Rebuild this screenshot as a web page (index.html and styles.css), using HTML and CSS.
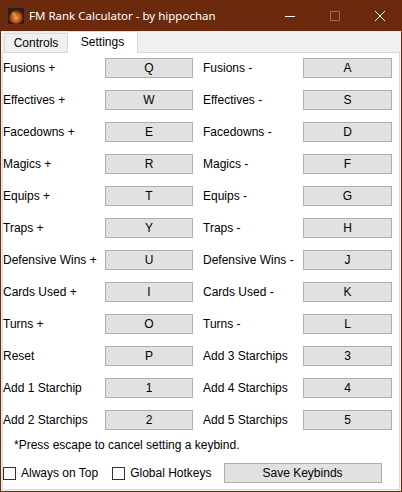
FILE: index.html
```html
<!DOCTYPE html>
<html lang="en">
  <head>
    <meta charset="UTF-8" />
    <title>FM Rank Calculator - by hippochan</title>
    <link rel="stylesheet" href="styles.css">
  </head>
  <body>
    <div class="window">

      <div class="titlebar">
        <svg class="app-icon" width="16" height="16" viewBox="0 0 16 16">
          <defs>
            <radialGradient id="glow" cx="0.5" cy="0.55" r="0.6">
              <stop offset="0" stop-color="#f2b040"/>
              <stop offset="0.45" stop-color="#c8601c"/>
              <stop offset="1" stop-color="#3a1a10"/>
            </radialGradient>
          </defs>
          <rect width="16" height="16" fill="#2c1c18"/>
          <ellipse cx="8" cy="9" rx="7" ry="7" fill="url(#glow)"/>
          <circle cx="6" cy="6" r="2" fill="#e89a3a" opacity="0.7"/>
        </svg>
        <span class="title">FM Rank Calculator - by hippochan</span>
        <div class="caption-buttons">
          <span class="cap-btn">
            <svg width="10" height="10" viewBox="0 0 10 10"><path d="M0 5.5H10" stroke="#fff" stroke-width="1"/></svg>
          </span>
          <span class="cap-btn">
            <svg width="10" height="10" viewBox="0 0 10 10"><rect x="0.5" y="0.5" width="9" height="9" fill="none" stroke="#9a6a55" stroke-width="1"/></svg>
          </span>
          <span class="cap-btn">
            <svg width="10" height="10" viewBox="0 0 10 10"><path d="M0 0L10 10M10 0L0 10" stroke="#fff" stroke-width="1"/></svg>
          </span>
        </div>
      </div>

      <div class="client">
        <div class="tabs">
          <span class="tab">Controls</span>
          <span class="tab active">Settings</span>
        </div>

        <div class="panel">
          <div class="keys">
            <span class="lbl">Fusions +</span><span class="key">Q</span>
            <span class="lbl">Fusions -</span><span class="key">A</span>

            <span class="lbl">Effectives +</span><span class="key">W</span>
            <span class="lbl">Effectives -</span><span class="key">S</span>

            <span class="lbl">Facedowns +</span><span class="key">E</span>
            <span class="lbl">Facedowns -</span><span class="key">D</span>

            <span class="lbl">Magics +</span><span class="key">R</span>
            <span class="lbl">Magics -</span><span class="key">F</span>

            <span class="lbl">Equips +</span><span class="key">T</span>
            <span class="lbl">Equips -</span><span class="key">G</span>

            <span class="lbl">Traps +</span><span class="key">Y</span>
            <span class="lbl">Traps -</span><span class="key">H</span>

            <span class="lbl">Defensive Wins +</span><span class="key">U</span>
            <span class="lbl">Defensive Wins -</span><span class="key">J</span>

            <span class="lbl">Cards Used +</span><span class="key">I</span>
            <span class="lbl">Cards Used -</span><span class="key">K</span>

            <span class="lbl">Turns +</span><span class="key">O</span>
            <span class="lbl">Turns -</span><span class="key">L</span>

            <span class="lbl">Reset</span><span class="key">P</span>
            <span class="lbl">Add 3 Starchips</span><span class="key">3</span>

            <span class="lbl">Add 1 Starchip</span><span class="key">1</span>
            <span class="lbl">Add 4 Starchips</span><span class="key">4</span>

            <span class="lbl">Add 2 Starchips</span><span class="key">2</span>
            <span class="lbl">Add 5 Starchips</span><span class="key">5</span>
          </div>

          <p class="note">*Press escape to cancel setting a keybind.</p>

          <div class="options">
            <label class="check"><span class="box"></span>Always on Top</label>
            <label class="check"><span class="box"></span>Global Hotkeys</label>
            <span class="save">Save Keybinds</span>
          </div>
        </div>
      </div>

    </div>
  </body>
</html>
```

FILE: styles.css
```css
body {
  margin: 0;
  font-family: "Liberation Sans", Arial, sans-serif;
  font-size: 12px;
  color: #000;
  overflow: hidden;
}

.window {
  width: 402px;
  height: 492px;
  box-sizing: border-box;
  background-color: #6b2a0e;
  padding: 0 1px 1px 1px;
  display: flex;
  flex-direction: column;
}

/* title bar */
.titlebar {
  height: 31px;
  margin: 0 -1px;
  display: flex;
  align-items: center;
  color: white;
}
.app-icon {
  margin-left: 8px;
  margin-right: 5px;
}
.title {
  font-family: "Noto Sans", sans-serif;
  font-size: 11.5px;
  flex: 1;
}
.caption-buttons {
  display: flex;
}
.cap-btn {
  width: 45px;
  height: 31px;
  display: flex;
  align-items: center;
  justify-content: center;
}

/* window body */
.client {
  flex: 1;
  background-color: #f0f0f0;
  display: flex;
  flex-direction: column;
  padding: 0 1px 1px 1px;
}
.tabs {
  display: flex;
  height: 21px;
  padding-left: 2px;
  align-items: flex-end;
  position: relative;
  z-index: 1;
}
.tab {
  width: 64px;
  height: 19px;
  line-height: 18px;
  text-align: center;
  border: 1px solid #d9d9d9;
  border-bottom: none;
  box-sizing: border-box;
}
.tab.active {
  width: 70px;
  height: 22px;
  margin-bottom: -1px;
  background-color: white;
  line-height: 20px;
  border-left: none;
}
.panel {
  flex: 1;
  background-color: white;
  border: 1px solid #d9d9d9;
}

/* key grid */
.keys {
  display: grid;
  grid-template-columns: 102px 88px 110px 89px;
  grid-auto-rows: 32px;
  align-items: center;
  margin-top: -1px;
}
.lbl {
  white-space: nowrap;
}
.lbl:nth-child(4n+3) {
  padding-left: 10px;
}
.key {
  height: 20px;
  line-height: 18px;
  box-sizing: border-box;
  background-color: #e1e1e1;
  border: 1px solid #adadad;
  text-align: center;
}

.note {
  margin: 0;
  padding-left: 11px;
  height: 22px;
  line-height: 18px;
}

.options {
  display: flex;
  align-items: center;
  height: 30px;
}
.check {
  display: flex;
  align-items: center;
  margin-right: 14px;
}
.check + .check {
  margin-right: 12px;
}
.box {
  width: 13px;
  height: 13px;
  box-sizing: border-box;
  border: 1px solid #333;
  background-color: white;
  margin-right: 5px;
}
.save {
  width: 158px;
  height: 20px;
  line-height: 18px;
  box-sizing: border-box;
  background-color: #e1e1e1;
  border: 1px solid #adadad;
  text-align: center;
}
```
